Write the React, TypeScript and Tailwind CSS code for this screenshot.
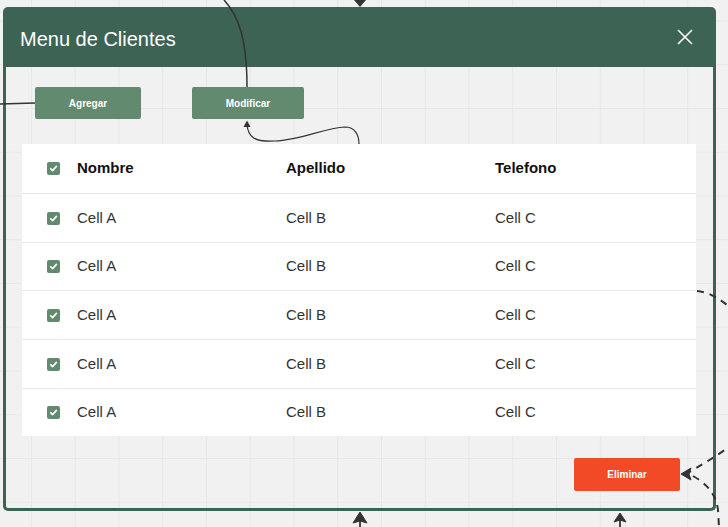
import React from "react";

const Check = () => (
  <div className="w-[13px] h-[13px] rounded-[2px] bg-[#628a6f] flex items-center justify-center shrink-0">
    <svg width="9" height="9" viewBox="0 0 9 9" fill="none">
      <path d="M1.6 4.7 L3.6 6.6 L7.4 2.4" stroke="#ffffff" strokeWidth="1.6" strokeLinecap="round" strokeLinejoin="round" />
    </svg>
  </div>
);

const rows = ["h-[49px] border-b", "h-[48px] border-b", "h-[49px] border-b", "h-[49px] border-b", "h-[47px]"];

export default function App() {
  return (
    <div
      className="relative w-[728px] h-[527px] overflow-hidden bg-[#f1f1f1] bg-[linear-gradient(to_right,#e7e7e7_1px,transparent_1px),linear-gradient(to_bottom,#e7e7e7_1px,transparent_1px)] bg-[size:43.75px_43.75px] bg-[position:31px_20.5px] pt-[7px] pl-[3px]"
      style={{ fontFamily: '"Liberation Sans", Arial, sans-serif' }}
    >
      <div className="w-[713px] h-[504px] flex flex-col">
        <div className="h-[60px] bg-[#3d6354] rounded-t-[5px] flex items-center justify-between pl-[17px] pr-[23px]">
          <span className="text-white text-[20px] leading-none mt-[3px]">Menu de Clientes</span>
          <svg width="16" height="16" viewBox="0 0 16 16" fill="none">
            <path d="M1 1 L15 15 M15 1 L1 15" stroke="#ffffff" strokeWidth="1.6" />
          </svg>
        </div>
        <div className="flex-1 border-[3px] border-t-0 border-[#3d6354] rounded-b-[5px] flex flex-col">
          <div className="flex mt-[20px] pl-[29px]">
            <div className="w-[106px] h-[32px] rounded-[2px] bg-[#628a6f] text-white text-[10px] font-bold flex items-center justify-center">
              Agregar
            </div>
            <div className="ml-[51px] w-[112px] h-[32px] rounded-[2px] bg-[#628a6f] text-white text-[10px] font-bold flex items-center justify-center">
              Modificar
            </div>
          </div>
          <div className="mt-[25px] ml-[16px] w-[674px] bg-white flex flex-col">
            <div className="h-[50px] border-b border-[#e8e8e8] flex items-center pl-[25px] text-[15px] font-bold text-[#111]">
              <Check />
              <div className="ml-[17px] w-[209px]">Nombre</div>
              <div className="w-[209px]">Apellido</div>
              <div className="flex-1">Telefono</div>
            </div>
            {rows.map((r, i) => (
              <div key={i} className={`${r} border-[#e8e8e8] flex items-center pl-[25px] text-[15px] text-[#333]`}>
                <Check />
                <div className="ml-[17px] w-[209px]">Cell A</div>
                <div className="w-[209px]">Cell B</div>
                <div className="flex-1">Cell C</div>
              </div>
            ))}
          </div>
          <div className="flex justify-end mt-[22px] pr-[33px]">
            <div className="w-[106px] h-[33px] rounded-[2px] bg-[#f24a27] text-white text-[10px] font-bold flex items-center justify-center">
              Eliminar
            </div>
          </div>
        </div>
      </div>

      <svg className="absolute inset-0 pointer-events-none" width="728" height="527" viewBox="0 0 728 527" fill="none">
        <path d="M224 0 C238 15 247 38 247 87" stroke="#333" strokeWidth="1.5" />
        <path d="M354 0 L366 0 L360 7 Z" fill="#333" />
        <path d="M0 104 L35 103" stroke="#333" strokeWidth="1.5" />
        <path d="M247 124 C248 138 255 142 275 141 C300 140 325 128 345 127 C355 127 359 135 359 144" stroke="#333" strokeWidth="1.2" />
        <path d="M243.5 127 L247 120.5 L250.5 127 Z" fill="#333" />
        <path d="M697 291 C710 292 722 300 735 312" stroke="#333" strokeWidth="2" strokeDasharray="7 6" />
        <path d="M735 443 C718 455 700 466 686 474" stroke="#333" strokeWidth="2" strokeDasharray="7 6" />
        <path d="M681 474 L691 468 L689 474 L691 480 Z" fill="#333" stroke="#333" strokeWidth="1" strokeLinejoin="round" />
        <path d="M693 476 C707 484 716 494 718 510 L719 527" stroke="#333" strokeWidth="2" strokeDasharray="7 6" />
        <path d="M360 512 L367 523 L360 521 L353 523 Z" fill="#333" stroke="#333" strokeWidth="1" strokeLinejoin="round" />
        <path d="M360 520 L360 527" stroke="#333" strokeWidth="1.8" />
        <path d="M620 513 L626 522 L620 520 L614 522 Z" fill="#333" stroke="#333" strokeWidth="1" strokeLinejoin="round" />
        <path d="M620 520 L620 527" stroke="#333" strokeWidth="1.8" />
      </svg>
    </div>
  );
}
